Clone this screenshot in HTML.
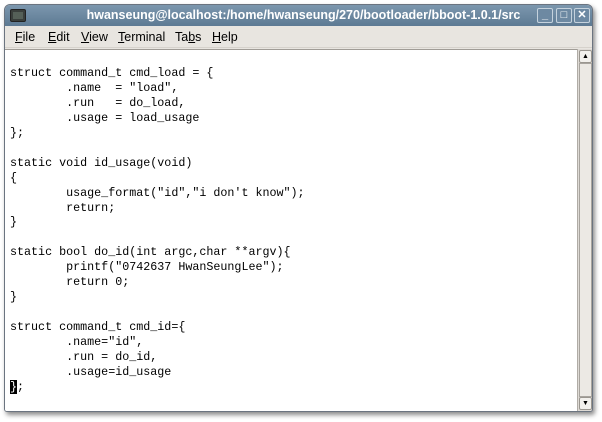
<!DOCTYPE html>
<html><head><meta charset="utf-8"><style>
*{margin:0;padding:0;box-sizing:border-box}
body{width:602px;height:422px;background:#fff;position:relative;overflow:hidden;font-family:"Liberation Sans",sans-serif}
.win{position:absolute;left:4px;top:4px;width:589px;height:408px;border:1px solid #6b7480;border-radius:6px 6px 3px 3px;background:#e8e5e0;box-shadow:2px 3px 5px rgba(0,0,0,.45);overflow:hidden}
.title{position:absolute;left:0;top:0;width:100%;height:21px;background:linear-gradient(#7c97ae,#5d7a93);color:#fff;font-weight:bold;font-size:12.5px;line-height:21px;text-align:center;padding-left:10px}
.icon{position:absolute;left:5px;top:4px;width:16px;height:13px;background:#3a3f3c;border:1px solid #222;border-radius:2px}
.icon:after{content:"";position:absolute;left:2px;top:2px;width:10px;height:7px;background:#556058}
.btn{position:absolute;top:3px;width:16px;height:15px;border:1px solid #c5d2dd;border-radius:2px;background:#6d89a2;color:#fff;font-size:11px;line-height:13px;text-align:center;font-weight:bold}
.menu{position:absolute;left:0;top:21px;width:100%;height:22px;font-size:12.5px;line-height:22px;color:#000;border-bottom:1px solid #d6d2cc}
.menu span{position:absolute;top:0}
.term{position:absolute;left:0;top:44px;width:572px;height:363px;background:#fff;border-top:1px solid #a09c96}
pre{position:absolute;left:5px;top:1px;font-family:"Liberation Mono",monospace;font-size:11.7px;line-height:14.96px;color:#000}
.cur{background:#000;color:#fff}
.sb{position:absolute;left:572px;top:44px;width:15px;height:363px;background:#dedad5;border-left:1px solid #b0aca6}
.arr{position:absolute;left:1px;width:13px;height:13px;background:#f2f0ec;border:1px solid #9a968f;border-radius:2px;font-size:7px;line-height:11px;text-align:center}
.thumb{position:absolute;left:1px;top:14px;width:13px;height:334px;background:#ece9e4;border:1px solid #a8a49e}
</style></head><body>
<div class="win">
<div class="title"><div class="icon"></div>hwanseung@localhost:/home/hwanseung/270/bootloader/bboot-1.0.1/src</div>
<div class="btn" style="left:532px">_</div>
<div class="btn" style="left:551px">□</div>
<div class="btn" style="left:569px">✕</div>
<div class="menu"><span style="left:10px"><u>F</u>ile</span><span style="left:43px"><u>E</u>dit</span><span style="left:76px"><u>V</u>iew</span><span style="left:113px"><u>T</u>erminal</span><span style="left:170px">Ta<u>b</u>s</span><span style="left:207px"><u>H</u>elp</span></div>
<div class="term"><pre>

struct command_t cmd_load = {
        .name  = "load",
        .run   = do_load,
        .usage = load_usage
};

static void id_usage(void)
{
        usage_format("id","i don't know");
        return;
}

static bool do_id(int argc,char **argv){
        printf("0742637 HwanSeungLee");
        return 0;
}

struct command_t cmd_id={
        .name="id",
        .run = do_id,
        .usage=id_usage
<span class="cur">}</span>;</pre></div>
<div class="sb"><div class="arr" style="top:1px">▲</div><div class="thumb"></div><div class="arr" style="top:348px">▼</div></div>
</div>
</body></html>
